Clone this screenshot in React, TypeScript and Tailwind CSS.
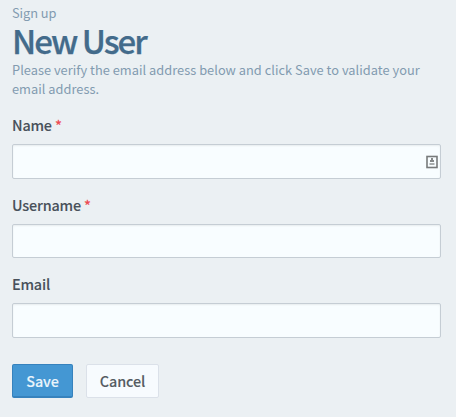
import React from "react";

type FieldProps = {
  id: string;
  label: string;
  required?: boolean;
  className: string;
  inputClassName: string;
  children?: React.ReactNode;
};

function Field({ id, label, required, className, inputClassName, children }: FieldProps) {
  return (
    <div className={className}>
      <label
        htmlFor={id}
        className="block h-[18px] text-[14.4px] leading-[18px] font-medium tracking-[-0.18px] text-[#48515a] [-webkit-text-stroke:0.1px]"
      >
        {label}
        {required && <span className="text-[#ed4c52]"> *</span>}
      </label>
      <div className="relative mt-[10px]">
        <input
          id={id}
          className={`block w-full rounded-[2px] border border-[#c5cdd4] bg-[#f8fdff] px-3 shadow-[inset_0_1px_2px_rgba(0,0,0,0.07)] outline-none ${inputClassName}`}
        />
        {children}
      </div>
    </div>
  );
}

function ContactIcon() {
  return (
    <svg className="absolute top-[11px] right-[3px]" width="12" height="14" viewBox="0 0 12 14" aria-hidden="true">
      <rect x="1" y="1.5" width="10" height="11" fill="#f8fdff" stroke="#777a7b" strokeWidth="1.6" />
      <path d="M5 3h2v2h1v2H4V5h1z" fill="#858889" />
      <path d="M3.5 8h5v2h-5z" fill="#a9adae" />
    </svg>
  );
}

export default function App() {
  return (
    <main className="h-[417px] w-[456px] overflow-hidden bg-[#ebf0f3] pt-[3px] pr-[15px] pl-3 font-['Noto_Sans_CJK_SC','Noto_Sans',sans-serif]">
      <header>
        <p className="h-[19px] text-[12.8px] leading-[19px] tracking-[-0.05px] text-[#829bb0]">Sign up</p>
        <h1 className="h-[38px] text-[33px] leading-[37px] font-medium tracking-[-2px] text-[#436b8b] [-webkit-text-stroke:0.25px]">
          New User
        </h1>
        <p className="h-[38px] w-[420px] text-[12.8px] leading-[19px] tracking-[0.03px] text-[#829bb0]">
          Please verify the email address below and click Save to validate your email address.
        </p>
      </header>
      <form onSubmit={(event) => event.preventDefault()}>
        <Field id="name" label="Name" required className="mt-[18px]" inputClassName="h-[35px]">
          <ContactIcon />
        </Field>
        <Field id="username" label="Username" required className="mt-[17px]" inputClassName="h-[34px]" />
        <Field id="email" label="Email" className="mt-[17px]" inputClassName="h-[35px]" />
        <div className="mt-[26px] flex gap-[13px] text-[14.4px] font-medium tracking-[-0.1px]">
          <button className="h-[34px] w-[61px] rounded-[2px] border border-b-2 border-[#3682bd] bg-[#4497d3] pt-px text-[#e9f4fb] [-webkit-text-stroke:0.1px]">
            Save
          </button>
          <button className="h-[34px] w-[73px] rounded-[2px] border border-[#dbe1e9] bg-[#f7fbfe] text-[#555c62] [-webkit-text-stroke:0.1px]">
            Cancel
          </button>
        </div>
      </form>
    </main>
  );
}
